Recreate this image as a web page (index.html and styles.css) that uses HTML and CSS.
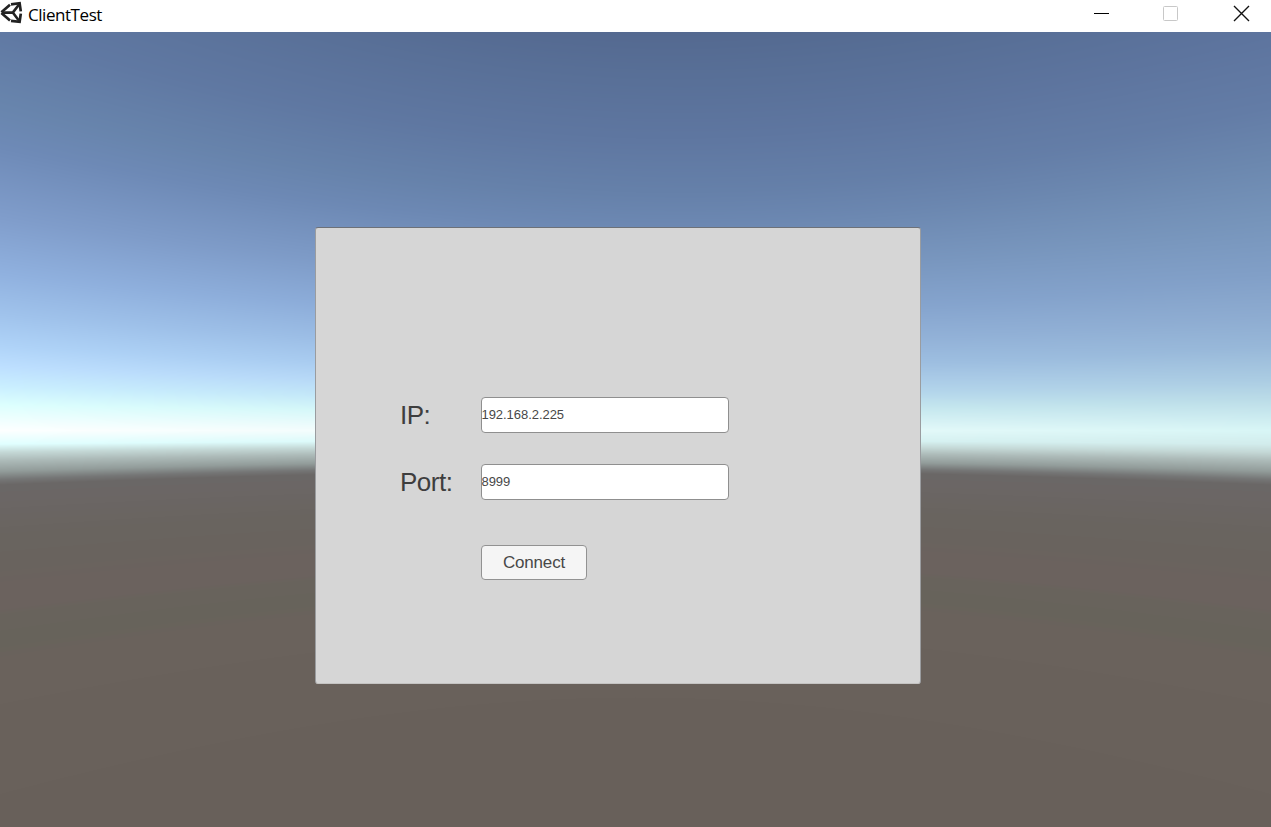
FILE: index.html
```html
<!DOCTYPE html>
<html lang="en">
<head>
<meta charset="utf-8">
<title>ClientTest</title>
<link rel="stylesheet" href="styles.css">
</head>
<body>
<div class="window">
  <header class="titlebar">
    <svg class="app-icon" width="24" height="26" viewBox="0 0 24 26" fill="none" stroke="#222">
      <path d="M1.4 12.2 10 4.8M11 4.4 19.6 3.2 20.8 11.4M20.8 13.6 19.6 21.8 11 20.8M10 20.4 1.4 13" stroke-width="2.7"/>
      <path d="M1.8 12.6H12.8M19.2 4.2 12.8 12.6 19.2 21" stroke-width="2.6"/>
    </svg>
    <h1 class="title">ClientTest</h1>
    <div class="controls">
      <svg width="17" height="17" viewBox="0 0 17 17"><path d="M1 8.5H16" stroke="#000"/></svg>
      <svg width="17" height="17" viewBox="0 0 17 17"><rect x=".5" y="1.5" width="14" height="14" rx="1" fill="none" stroke="#c8c8c8"/></svg>
      <svg width="17" height="17" viewBox="0 0 17 17"><path d="M1 1 16 16M16 1 1 16" stroke="#111" stroke-width="1.4"/></svg>
    </div>
  </header>
  <main class="scene">
    <canvas class="sky" width="1271" height="795"></canvas>
    <section class="panel">
      <div class="row">
        <div class="label">IP:</div>
        <div class="field">192.168.2.225</div>
      </div>
      <div class="row">
        <div class="label">Port:</div>
        <div class="field">8999</div>
      </div>
      <button class="connect" type="button">Connect</button>
    </section>
  </main>
</div>
<script src="sky.js"></script>
</body>
</html>
```
FILE: styles.css
```css
* { box-sizing: border-box; }
body { margin: 0; overflow: hidden; background: #fff; }
.window { display: flex; flex-direction: column; width: 1271px; height: 827px; }
.titlebar { display: flex; align-items: flex-start; height: 32px; background: #fff; }
.app-icon { display: block; flex: none; }
.title {
  margin: 3px 0 0 4px;
  font: 400 17px/24px "Open Sans", "Noto Sans", sans-serif;
  letter-spacing: -0.45px;
  color: #000;
}
.controls { display: flex; gap: 53px; margin: 5px 21px 0 auto; }
.controls svg { display: block; }
.scene { position: relative; flex: 1; padding: 195px 0 0 315px; }
.sky { position: absolute; inset: 0; width: 1271px; height: 795px; }
.panel {
  position: relative;
  width: 606px;
  height: 457px;
  padding: 169px 0 0 84px;
  border: 1px solid #9a9c9f;
  border-top-color: #6d7178;
  border-bottom-color: #c4c3c2;
  border-radius: 3px;
  background: #d6d6d6;
  font-family: "Liberation Sans", Arial, sans-serif;
}
.row { display: flex; align-items: center; height: 36px; margin-bottom: 31px; }
.label { width: 81px; font-size: 26px; line-height: 30px; letter-spacing: -0.5px; color: #3e3e3e; }
.field {
  width: 248px;
  height: 36px;
  border: 1px solid #8f8f8f;
  border-radius: 4px;
  background: #fff;
  font-size: 13px;
  line-height: 34px;
  letter-spacing: -0.05px;
  color: #484848;
  text-indent: -0.5px;
}
.connect {
  display: block;
  width: 106px;
  height: 35px;
  margin: 45px 0 0 81px;
  padding: 1px 0 0;
  border: 1px solid #929292;
  border-radius: 4px;
  background: #f5f5f5;
  font: 17px/32px "Liberation Sans", Arial, sans-serif;
  letter-spacing: -0.2px;
  color: #484848;
}
```
FILE: sky.js
```javascript
// Procedural skybox: colour depends on elevation, blended from sun side (left) to far side (right).
const FOCAL = 688;
const HORIZON = 398;
const ground = [
  [-16, 0xc4d8d6], [-22, 0xadbbb9], [-30, 0x929c9a], [-36, 0x757676], [-40, 0x6a6766],
  [-50, 0x6b6665], [-78, 0x69645f], [-100, 0x69635e], [-115, 0x6b625e], [-131, 0x6b625e],
  [-136, 0x68635c], [-158, 0x67635b], [-168, 0x6a625c], [-300, 0x68605a], [-500, 0x68605a]
];
const near = [
  [398, 0x566b93], [361, 0x5a7199], [292, 0x6079a3], [238, 0x6885ad], [208, 0x6e8ab7],
  [156, 0x809dcb], [115, 0x90b1df], [85, 0xa0c3ec], [62, 0xafd3f8], [47, 0xbddfff],
  [32, 0xcaefff], [19, 0xdcfffe], [0, 0xfdffff], [-10, 0xe0ffff]
].concat(ground);
const far = [
  [398, 0x52678d], [361, 0x556c93], [292, 0x5d749e], [238, 0x637ca6], [200, 0x6b87ae],
  [156, 0x7694ba], [115, 0x819fc7], [85, 0x8dabd0], [62, 0x97b7d8], [36, 0xaccde3],
  [22, 0xbcdde8], [0, 0xd8f6f6], [-10, 0xd2ecec]
].concat(ground);

function sample(ramp, t, shift) {
  let i = 1;
  while (i < ramp.length - 1 && ramp[i][0] > t) i++;
  const [t0, c0] = ramp[i - 1];
  const [t1, c1] = ramp[i];
  const k = Math.min(1, Math.max(0, (t0 - t) / (t0 - t1)));
  return (c0 >> shift & 255) * (1 - k) + (c1 >> shift & 255) * k;
}

const canvas = document.querySelector(".sky");
const ctx = canvas.getContext("2d");
const image = ctx.createImageData(canvas.width, canvas.height);
for (let x = 0; x < canvas.width; x++) {
  const stretch = Math.hypot(1, (x - 635) / FOCAL);
  const mix = x / canvas.width;
  for (let y = 0; y < canvas.height; y++) {
    const t = (HORIZON - y) / stretch;
    const p = (y * canvas.width + x) * 4;
    for (let c = 0; c < 3; c++) {
      const shift = 16 - c * 8;
      image.data[p + c] = sample(near, t, shift) * (1 - mix) + sample(far, t, shift) * mix;
    }
    image.data[p + 3] = 255;
  }
}
ctx.putImageData(image, 0, 0);
```
